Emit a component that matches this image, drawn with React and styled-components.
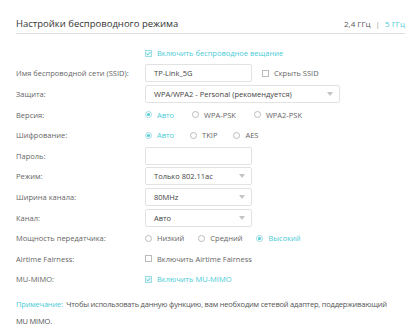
import React from "react";
import styled, { createGlobalStyle } from "styled-components";

const Global = createGlobalStyle`
  html, body { margin: 0; padding: 0; background: #fff; }
  body { font-family: "Open Sans", "DejaVu Sans", sans-serif; }
`;

const teal = "#4acbd6";

const Page = styled.div`
  padding: 0 15px 0 16px;
  width: 389px;
`;

const Header = styled.div`
  display: flex;
  align-items: flex-end;
  justify-content: space-between;
  height: 34px;
  border-bottom: 1px solid #dcdcdc;
  box-sizing: border-box;
  padding-bottom: 3px;
`;

const Title = styled.div`
  font-size: 9.5px;
  color: #333;
  line-height: 12px;
`;

const Band = styled.div`
  font-size: 8px;
  color: #555;
  line-height: 12px;
  span { color: ${teal}; }
  i { font-style: normal; color: #999; margin: 0 5px; }
`;

const Form = styled.div`
  display: flex;
  flex-direction: column;
  padding-top: 9px;
`;

const Row = styled.div`
  display: grid;
  grid-template-columns: 129px 1fr;
  align-items: center;
  height: ${(p) => p.$h || 20.6}px;
`;

const Label = styled.div`
  font-size: 7.5px;
  color: #666;
`;

const Controls = styled.div`
  display: flex;
  align-items: center;
  gap: ${(p) => p.$gap || 10}px;
`;

const Box = styled.div`
  box-sizing: border-box;
  width: ${(p) => p.$w || 107}px;
  height: 18px;
  border: 1px solid #e2e2e2;
  border-radius: 2px;
  display: flex;
  align-items: center;
  justify-content: space-between;
  padding: 0 6px 0 8px;
  font-size: 7.5px;
  color: #444;
`;

const Arrow = styled.span`
  width: 0;
  height: 0;
  border-left: 3px solid transparent;
  border-right: 3px solid transparent;
  border-top: 4px solid #c4c4c4;
`;

const Check = styled.span`
  display: inline-flex;
  align-items: center;
  gap: 5px;
  font-size: 7.5px;
  color: ${(p) => (p.$on ? teal : "#666")};
`;

const CheckBox = styled.span`
  box-sizing: border-box;
  width: 7px;
  height: 7px;
  border: 1px solid ${(p) => (p.$on ? "#9fdde3" : "#bbb")};
  background: ${(p) => (p.$on ? "#e8f7f9" : "#fff")};
  display: inline-flex;
  align-items: center;
  justify-content: center;
  svg { display: block; }
`;

const RadioDot = styled.span`
  box-sizing: border-box;
  width: 7px;
  height: 7px;
  border-radius: 50%;
  border: 1px solid ${(p) => (p.$on ? "#9fdde3" : "#bbb")};
  background: #fff;
  display: inline-flex;
  align-items: center;
  justify-content: center;
  &::after {
    content: "";
    width: 3px;
    height: 3px;
    border-radius: 50%;
    background: ${(p) => (p.$on ? teal : "transparent")};
  }
`;

const Note = styled.div`
  font-size: 7.5px;
  letter-spacing: -0.2px;
  color: #555;
  line-height: 17px;
  padding-top: 6px;
  span { color: ${teal}; }
`;

const Checkbox = ({ on, children }) => (
  <Check $on={on}>
    <CheckBox $on={on}>
      {on && (
        <svg width="5" height="5" viewBox="0 0 5 5">
          <path d="M0.6 2.6 L2 3.9 L4.4 1" stroke={teal} strokeWidth="0.9" fill="none" />
        </svg>
      )}
    </CheckBox>
    {children}
  </Check>
);

const Radio = ({ on, children }) => (
  <Check $on={on}>
    <RadioDot $on={on} />
    {children}
  </Check>
);

const Select = ({ w, children }) => (
  <Box $w={w}>
    <span>{children}</span>
    <Arrow />
  </Box>
);

export default function App() {
  return (
    <Page>
      <Global />
      <Header>
        <Title>Настройки беспроводного режима</Title>
        <Band>
          2,4 ГГц<i>|</i><span>5 ГГц</span>
        </Band>
      </Header>
      <Form>
        <Row $h={20.2}>
          <div />
          <Checkbox on>Включить беспроводное вещание</Checkbox>
        </Row>
        <Row>
          <Label>Имя беспроводной сети (SSID):</Label>
          <Controls>
            <Box>TP-Link_5G</Box>
            <Checkbox>Скрыть SSID</Checkbox>
          </Controls>
        </Row>
        <Row>
          <Label>Защита:</Label>
          <Select w={195}>WPA/WPA2 - Personal (рекомендуется)</Select>
        </Row>
        <Row>
          <Label>Версия:</Label>
          <Controls $gap={18}>
            <Radio on>Авто</Radio>
            <Radio>WPA-PSK</Radio>
            <Radio>WPA2-PSK</Radio>
          </Controls>
        </Row>
        <Row>
          <Label>Шифрование:</Label>
          <Controls $gap={16}>
            <Radio on>Авто</Radio>
            <Radio>TKIP</Radio>
            <Radio>AES</Radio>
          </Controls>
        </Row>
        <Row>
          <Label>Пароль:</Label>
          <Box />
        </Row>
        <Row>
          <Label>Режим:</Label>
          <Select>Только 802.11ac</Select>
        </Row>
        <Row>
          <Label>Ширина канала:</Label>
          <Select>80MHz</Select>
        </Row>
        <Row>
          <Label>Канал:</Label>
          <Select>Авто</Select>
        </Row>
        <Row>
          <Label>Мощность передатчика:</Label>
          <Controls $gap={14}>
            <Radio>Низкий</Radio>
            <Radio>Средний</Radio>
            <Radio on>Высокий</Radio>
          </Controls>
        </Row>
        <Row>
          <Label>Airtime Fairness:</Label>
          <Checkbox>Включить Airtime Fairness</Checkbox>
        </Row>
        <Row>
          <Label>MU-MIMO:</Label>
          <Checkbox on>Включить MU-MIMO</Checkbox>
        </Row>
      </Form>
      <Note>
        <span>Примечание:</span>&nbsp; Чтобы использовать данную функцию, вам необходим сетевой адаптер, поддерживающий {"MU\u00a0MIMO."}
      </Note>
    </Page>
  );
}
